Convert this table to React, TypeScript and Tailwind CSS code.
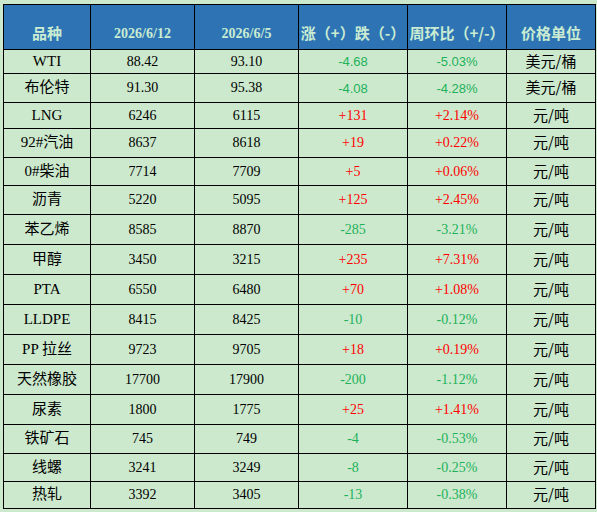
const rows: [string, string, string, string, string, string, number][] = [
  ["WTI", "88.42", "93.10", "-4.68", "-5.03%", "美元/桶", 24],
  ["布伦特", "91.30", "95.38", "-4.08", "-4.28%", "美元/桶", 29],
  ["LNG", "6246", "6115", "+131", "+2.14%", "元/吨", 26],
  ["92#汽油", "8637", "8618", "+19", "+0.22%", "元/吨", 29],
  ["0#柴油", "7714", "7709", "+5", "+0.06%", "元/吨", 28],
  ["沥青", "5220", "5095", "+125", "+2.45%", "元/吨", 29],
  ["苯乙烯", "8585", "8870", "-285", "-3.21%", "元/吨", 30],
  ["甲醇", "3450", "3215", "+235", "+7.31%", "元/吨", 30],
  ["PTA", "6550", "6480", "+70", "+1.08%", "元/吨", 30],
  ["LLDPE", "8415", "8425", "-10", "-0.12%", "元/吨", 30],
  ["PP 拉丝", "9723", "9705", "+18", "+0.19%", "元/吨", 30],
  ["天然橡胶", "17700", "17900", "-200", "-1.12%", "元/吨", 30],
  ["尿素", "1800", "1775", "+25", "+1.41%", "元/吨", 30],
  ["铁矿石", "745", "749", "-4", "-0.53%", "元/吨", 29],
  ["线螺", "3241", "3249", "-8", "-0.25%", "元/吨", 28],
  ["热轧", "3392", "3405", "-13", "-0.38%", "元/吨", 27],
];

const serif = "font-['Liberation_Serif','Noto_Sans_CJK_SC',serif]";
const cjk = "font-['Noto_Sans_CJK_SC',sans-serif]";

export default function App() {
  return (
    <div className="w-[597px] h-[512px] bg-[#cce9cd] pt-[4px] pl-[3px]">
      <table className="w-[592px] table-fixed border-collapse border border-black text-[14px] text-black">
        <colgroup>
          <col className="w-[87px]" />
          <col className="w-[104px]" />
          <col className="w-[104px]" />
          <col className="w-[109px]" />
          <col className="w-[99px]" />
          <col className="w-[89px]" />
        </colgroup>
        <thead>
          <tr className="h-[45px] bg-[#2e74b5] text-[#c9ecd2] font-bold">
            <th className={`border border-black pt-[12px] ${cjk} text-[15px]`}>品种</th>
            <th className={`border border-black pt-[12px] ${serif}`}>2026/6/12</th>
            <th className={`border border-black pt-[12px] ${serif}`}>2026/6/5</th>
            <th className={`border border-black pt-[12px] ${cjk} text-[15px] font-bold`}>涨（+）跌（-）</th>
            <th className={`border border-black pt-[12px] ${cjk} text-[15px]`}>周环比（+/-）</th>
            <th className={`border border-black pt-[12px] ${cjk} text-[15px]`}>价格单位</th>
          </tr>
        </thead>
        <tbody>
          {rows.map(([name, a, b, chg, pct, unit, h], i) => {
            const up = chg.startsWith("+");
            const color = up ? "text-[#ff0000]" : "text-[#1db15a]";
            const numFont = i < 2 ? "font-['Liberation_Sans',sans-serif] text-[13px]" : serif;
            return (
              <tr key={name} style={{ height: h }}>
                <td className={`border border-black text-center ${serif} text-[15px] leading-none pb-[1px]`}>{name}</td>
                <td className={`border border-black text-center ${serif} leading-none`}>{a}</td>
                <td className={`border border-black text-center ${serif} leading-none`}>{b}</td>
                <td className={`border border-black text-center ${numFont} ${color} leading-none`}>{chg}</td>
                <td className={`border border-black text-center ${numFont} ${color} leading-none`}>{pct}</td>
                <td className={`border border-black text-center ${cjk} text-[15px] leading-none pb-[3px]`}>{unit}</td>
              </tr>
            );
          })}
        </tbody>
      </table>
    </div>
  );
}
